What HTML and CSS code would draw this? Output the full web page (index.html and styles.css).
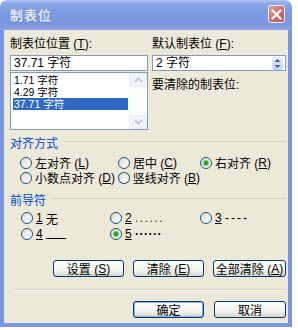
FILE: index.html
```html
<!DOCTYPE html>
<html lang="zh-CN">
  <head>
    <meta charset="UTF-8" />
    <title>制表位</title>
    <link rel="stylesheet" href="styles.css">
  </head>
  <body>
    <div class="window">
      <div class="titlebar">
        <span class="title">制表位</span>
        <span class="close">
          <svg width="11" height="11" viewBox="0 0 11 11"><path d="M1.5 1.5 L9.5 9.5 M9.5 1.5 L1.5 9.5" stroke="#fff" stroke-width="2.2" stroke-linecap="square"/></svg>
        </span>
      </div>
      <div class="frame">
        <div class="top">
          <div class="col">
            <div class="label">制表位位置 (<u>T</u>):</div>
            <div class="field">37.71 字符</div>
            <div class="list">
              <div class="items">
                <div class="item">1.71 字符</div>
                <div class="item">4.29 字符</div>
                <div class="item item--sel">37.71 字符</div>
              </div>
              <div class="scroll">
                <span class="scroll__btn">
                  <svg width="9" height="6" viewBox="0 0 9 6"><path d="M1 5 L4.5 1.5 L8 5" fill="none" stroke="#c3cbe0" stroke-width="2"/></svg>
                </span>
                <span class="scroll__track"></span>
                <span class="scroll__btn">
                  <svg width="9" height="6" viewBox="0 0 9 6"><path d="M1 1 L4.5 4.5 L8 1" fill="none" stroke="#c3cbe0" stroke-width="2"/></svg>
                </span>
              </div>
            </div>
          </div>
          <div class="col">
            <div class="label">默认制表位 (<u>F</u>):</div>
            <div class="field field--spin">
              <span>2 字符</span>
              <span class="spinner">
                <svg width="11" height="13" viewBox="0 0 11 13"><path d="M5.5 2 L8.5 5 L2.5 5 Z M5.5 11 L8.5 8 L2.5 8 Z" fill="#4d6185"/></svg>
              </span>
            </div>
            <div class="label label--clear">要清除的制表位:</div>
          </div>
        </div>

        <div class="group-head"><span>对齐方式</span></div>
        <div class="opts opts--align">
          <label class="opt"><span class="radio"></span>左对齐 (<u>L</u>)</label>
          <label class="opt"><span class="radio"></span>居中 (<u>C</u>)</label>
          <label class="opt"><span class="radio radio--on"></span>右对齐 (<u>R</u>)</label>
          <label class="opt"><span class="radio"></span>小数点对齐 (<u>D</u>)</label>
          <label class="opt"><span class="radio"></span>竖线对齐 (<u>B</u>)</label>
        </div>

        <div class="group-head group-head--lead"><span>前导符</span></div>
        <div class="opts opts--lead">
          <label class="opt"><span class="radio"></span><u>1</u>&nbsp;无</label>
          <label class="opt"><span class="radio"></span><u>2</u>&nbsp;<span class="dots">......</span></label>
          <label class="opt"><span class="radio"></span><u>3</u>&nbsp;<span class="dashes">----</span></label>
          <label class="opt"><span class="radio"></span><u>4</u>&nbsp;<span class="under"></span></label>
          <label class="opt"><span class="radio radio--on"></span><u>5</u>&nbsp;<span class="bdots">······</span></label>
        </div>

        <div class="buttons buttons--tabs">
          <button class="btn">设置 (<u>S</u>)</button>
          <button class="btn">清除 (<u>E</u>)</button>
          <button class="btn btn--wide">全部清除 (<u>A</u>)</button>
        </div>
        <div class="separator"></div>
        <div class="buttons buttons--ok">
          <button class="btn btn--default">确定</button>
          <button class="btn btn--cancel">取消</button>
        </div>
      </div>
    </div>
  </body>
</html>
```
FILE: styles.css
```css
* {
  box-sizing: border-box;
}

body {
  margin: 0;
  background: #fff;
  font-family: "Liberation Sans", "Noto Sans CJK SC", sans-serif;
  font-size: 12px;
  color: #000;
}

u {
  text-decoration: underline;
  text-underline-offset: 1px;
}

.window {
  width: 292px;
  height: 327px;
  display: flex;
  flex-direction: column;
}

.titlebar {
  height: 30px;
  flex-shrink: 0;
  display: flex;
  align-items: center;
  justify-content: space-between;
  padding: 0 7px 2px 10px;
  border-radius: 7px 7px 0 0;
  background: linear-gradient(to bottom, #b2c6f2 0, #90abea 3px, #7d9be2 10px, #7a96df 24px, #8ba5e4 30px);
}

.title {
  color: #e2eaf9;
  font-weight: bold;
  font-size: 13px;
  letter-spacing: 1px;
  text-shadow: 1px 1px 0 #6a84c8;
}

.close {
  width: 17px;
  height: 18px;
  display: flex;
  align-items: center;
  justify-content: center;
  border: 1px solid #eef0f8;
  border-radius: 3px;
  background: linear-gradient(135deg, #d99a94, #c76c68 60%, #b85b5a);
}

.frame {
  flex: 1;
  background: #ece9d8;
  border: 4px solid #7a96df;
  border-top: 0;
  padding: 6px 2px 0 6px;
  display: flex;
  flex-direction: column;
}

.top {
  display: grid;
  grid-template-columns: 138px 1fr;
  gap: 4px;
}

.col {
  display: flex;
  flex-direction: column;
}

.label {
  height: 16px;
  line-height: 16px;
  margin-bottom: 3px;
  white-space: nowrap;
}

.label--clear {
  margin-top: 6px;
}

.field {
  height: 16px;
  border: 1px solid #7f9db9;
  background: #fff;
  padding: 0 3px;
  line-height: 14px;
  display: flex;
  align-items: center;
  justify-content: space-between;
  white-space: nowrap;
}

.field--spin {
  padding-right: 2px;
}

.spinner {
  display: flex;
  width: 11px;
  height: 13px;
  border-radius: 2px;
  background: linear-gradient(to bottom, #e3ebfd, #c5d4f8);
}

.list {
  margin-top: 1px;
  height: 58px;
  border: 1px solid #7f9db9;
  background: #fff;
  display: flex;
}

.items {
  flex: 1;
  padding: 1px 1px 0 2px;
  font-size: 10.5px;
}

.item {
  height: 12px;
  line-height: 12px;
  padding-left: 1px;
  white-space: nowrap;
}

.item--sel {
  background: #316ac5;
  color: #fff;
}

.scroll {
  width: 18px;
  display: flex;
  flex-direction: column;
  background: #fbfbf8;
}

.scroll__btn {
  height: 14px;
  display: flex;
  align-items: center;
  justify-content: center;
  background: #f1f3fa;
  border: 1px solid #e6ebf7;
  border-radius: 2px;
}

.scroll__track {
  flex: 1;
}

.group-head {
  margin-top: 4px;
  height: 16px;
  display: flex;
  align-items: center;
  gap: 6px;
  color: #0046d5;
}

.group-head::after {
  content: "";
  flex: 1;
  height: 1px;
  margin-top: -1px;
  background: #d0d0bf;
}

.group-head--lead {
  margin-top: 6px;
}

.opts {
  display: grid;
  margin-top: 5px;
}

.opts--align {
  grid-template-columns: 98px 82px auto;
  grid-auto-rows: 15px;
  padding-left: 10px;
}

.opts--lead {
  grid-template-columns: 89px 90px auto;
  grid-auto-rows: 16px;
  padding-left: 11px;
  margin-top: 3px;
}

.opt {
  display: flex;
  align-items: center;
  white-space: nowrap;
}

.radio {
  width: 12px;
  height: 12px;
  margin-right: 3px;
  border-radius: 50%;
  border: 1px solid #1c5180;
  background: linear-gradient(135deg, #dcdcd4, #fff);
  display: flex;
  align-items: center;
  justify-content: center;
}

.radio--on::after {
  content: "";
  width: 4px;
  height: 4px;
  border-radius: 50%;
  background: #21a121;
  box-shadow: 0 0 1px 1px #5ec85e;
}

.dots {
  letter-spacing: 1.5px;
  color: #333;
}

.dashes {
  letter-spacing: 2px;
}

.under {
  width: 20px;
  height: 10px;
  border-bottom: 1px solid #000;
}

.bdots {
  font-weight: bold;
  letter-spacing: 0.5px;
}

.buttons {
  display: flex;
  justify-content: flex-end;
}

.buttons--tabs {
  margin-top: 18px;
  gap: 9px;
}

.buttons--ok {
  margin-top: 10px;
  gap: 10px;
}

.btn {
  width: 71px;
  height: 17px;
  padding: 0;
  font: inherit;
  color: #000;
  border: 1px solid #003c74;
  border-radius: 3px;
  background: linear-gradient(to bottom, #fff, #f4f4f0 60%, #d8d4c8);
  display: flex;
  align-items: center;
  justify-content: center;
  white-space: nowrap;
}

.btn--wide {
  width: 73px;
}

.btn--cancel {
  width: 72px;
}

.btn--default {
  box-shadow: inset 0 0 0 1px #8db2f3;
}

.separator {
  margin-top: 12px;
  margin-left: 4px;
  height: 2px;
  border-top: 1px solid #d0d0bf;
  border-bottom: 1px solid #fff;
}
```
